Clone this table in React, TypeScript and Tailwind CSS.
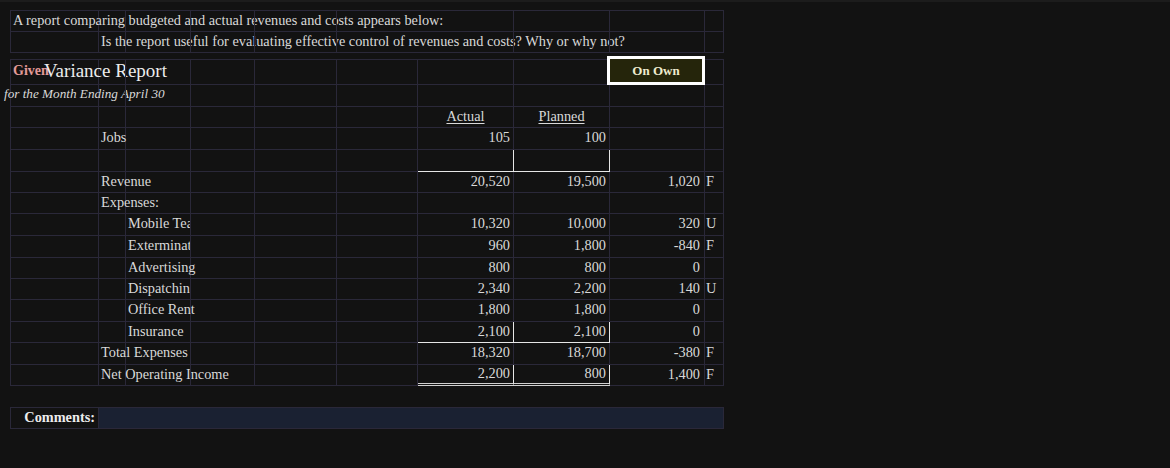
import { ReactNode } from "react";

const mainCols =
  "grid grid-rows-1 grid-cols-[88px_27px_65px_64px_82px_81px_96px_96px_95px_19px]";
const topCols =
  "grid grid-rows-1 grid-cols-[88px_27px_65px_64px_82px_177px_96px_95px_19px]";

interface CellProps {
  children?: ReactNode;
  className?: string;
}

function Cell({ children, className = "" }: CellProps) {
  return (
    <div
      className={`flex items-center whitespace-nowrap border-r border-b border-[#2a2839] pb-[3px] leading-[16px] ${className}`}
    >
      {children}
    </div>
  );
}

interface LineItem {
  label: string;
  indent?: boolean;
  clip?: boolean;
  actual?: string;
  planned?: string;
  variance?: string;
  flag?: string;
  height: string;
  mark?: "single" | "double";
}

const lines: LineItem[] = [
  { label: "Revenue", actual: "20,520", planned: "19,500", variance: "1,020", flag: "F", height: "h-[21px]" },
  { label: "Expenses:", height: "h-[21px]" },
  { label: "Mobile Team", indent: true, clip: true, actual: "10,320", planned: "10,000", variance: "320", flag: "U", height: "h-[22px]" },
  { label: "Exterminating", indent: true, clip: true, actual: "960", planned: "1,800", variance: "-840", flag: "F", height: "h-[22px]" },
  { label: "Advertising", indent: true, actual: "800", planned: "800", variance: "0", height: "h-[21px]" },
  { label: "Dispatching", indent: true, clip: true, actual: "2,340", planned: "2,200", variance: "140", flag: "U", height: "h-[21px]" },
  { label: "Office Rent", indent: true, actual: "1,800", planned: "1,800", variance: "0", height: "h-[22px]" },
  { label: "Insurance", indent: true, actual: "2,100", planned: "2,100", variance: "0", height: "h-[21px]", mark: "single" },
  { label: "Total Expenses", actual: "18,320", planned: "18,700", variance: "-380", flag: "F", height: "h-[22px]" },
  { label: "Net Operating Income", actual: "2,200", planned: "800", variance: "1,400", flag: "F", height: "h-[21px]", mark: "double" },
];

function markClass(mark?: "single" | "double") {
  if (mark === "single") return "border-r-[#e6e6e6] border-b-[#e6e6e6]";
  if (mark === "double")
    return "border-r-[#e6e6e6] border-b-[3px] border-b-[#cfcfcf] border-double";
  return "";
}

function LineRow({ item }: { item: LineItem }) {
  const mk = markClass(item.mark);
  return (
    <div className={`${mainCols} ${item.height}`}>
      <Cell />
      <Cell className="pl-[2px]">{item.indent ? "" : item.label}</Cell>
      <Cell className={`pl-[2px] ${item.clip ? "overflow-hidden" : ""}`}>
        {item.indent ? item.label : ""}
      </Cell>
      <Cell />
      <Cell />
      <Cell />
      <Cell className={`justify-end pr-[3px] ${mk}`}>{item.actual}</Cell>
      <Cell className={`justify-end pr-[3px] ${mk}`}>{item.planned}</Cell>
      <Cell className="justify-end pr-[4px]">{item.variance}</Cell>
      <Cell className="pl-[1px]">{item.flag}</Cell>
    </div>
  );
}

function EmptyCells({ count }: { count: number }) {
  return (
    <>
      {Array.from({ length: count }).map((_, i) => (
        <Cell key={i} />
      ))}
    </>
  );
}

export default function App() {
  return (
    <div className="min-h-[468px] bg-[#121212] font-['Liberation_Serif',serif] text-[14.3px] text-[#d9d9d9]">
      <div className="h-[2px] bg-[#1c1c1c]" />
      <div className="pl-[10px] pt-[8px]">
        {/* question block */}
        <div className="w-[714px] border-t border-l border-[#2a2839]">
          <div className={`${topCols} h-[21px]`}>
            <Cell className="pl-[2px]">
              A report comparing budgeted and actual revenues and costs appears below:
            </Cell>
            <EmptyCells count={8} />
          </div>
          <div className={`${topCols} h-[21px]`}>
            <Cell />
            <Cell className="pl-[2px]">
              Is the report useful for evaluating effective control of revenues and costs? Why or why not?
            </Cell>
            <EmptyCells count={7} />
          </div>
        </div>

        {/* report */}
        <div className="mt-[6px] w-[714px] border-t border-l border-[#2a2839]">
          <div className={`${mainCols} h-[25px]`}>
            <Cell className="pl-[2px] pb-[2px]">
              <span className="inline-block w-[31px] text-[14px] font-bold text-[#e29a98]">
                Given
              </span>
              <span className="text-[19px] text-[#ececec]">Variance Report</span>
            </Cell>
            <EmptyCells count={7} />
            <Cell className="pb-0">
              <div className="relative z-10 -ml-[3px] flex h-[29px] w-[98px] shrink-0 items-center justify-center border-[3px] border-white bg-[#25250b] text-[13px] font-bold text-[#efeccf]">
                On Own
              </div>
            </Cell>
            <Cell />
          </div>
          <div className={`${mainCols} h-[22px]`}>
            <Cell>
              <span className="-ml-[7px] text-[13.2px] italic">for the Month Ending April 30</span>
            </Cell>
            <EmptyCells count={9} />
          </div>
          <div className={`${mainCols} h-[21px]`}>
            <EmptyCells count={6} />
            <Cell className="justify-center">
              <span className="underline underline-offset-2">Actual</span>
            </Cell>
            <Cell className="justify-center">
              <span className="underline underline-offset-2">Planned</span>
            </Cell>
            <EmptyCells count={2} />
          </div>
          <div className={`${mainCols} h-[22px]`}>
            <Cell />
            <Cell className="pl-[2px]">Jobs</Cell>
            <EmptyCells count={4} />
            <Cell className="justify-end pr-[3px]">105</Cell>
            <Cell className="justify-end pr-[3px]">100</Cell>
            <EmptyCells count={2} />
          </div>
          <div className={`${mainCols} h-[22px]`}>
            <EmptyCells count={6} />
            <Cell className={markClass("single")} />
            <Cell className={markClass("single")} />
            <EmptyCells count={2} />
          </div>
          {lines.map((item) => (
            <LineRow key={item.label} item={item} />
          ))}
        </div>

        {/* comments */}
        <div className="mt-[21px] grid h-[22px] w-[714px] grid-rows-1 grid-cols-[88px_625px] border-t border-l border-[#2a2839]">
          <Cell className="justify-end pr-[3px] font-bold text-[#ececec]">Comments:</Cell>
          <Cell className="bg-[#1a2132]" />
        </div>
      </div>
    </div>
  );
}
